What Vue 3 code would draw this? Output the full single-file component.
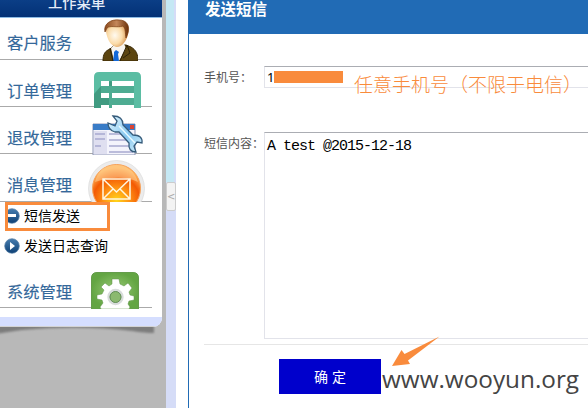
<script setup>
import { ref } from 'vue'

const phone = ref('1')
const message = ref('A test @2015-12-18')
const menu = [
  { id: 'service', label: '客户服务' },
  { id: 'order', label: '订单管理' },
  { id: 'change', label: '退改管理' },
  { id: 'message', label: '消息管理', children: ['短信发送', '发送日志查询'] },
  { id: 'system', label: '系统管理' },
]
</script>

<template>
  <div class="page">
    <aside class="side">
      <div class="panel">
        <header class="side-title">工作菜单</header>
        <template v-for="item in menu" :key="item.id">
          <div class="row" :class="item.id">
            <span class="label">{{ item.label }}</span>
            <svg v-if="item.id === 'service'" class="icon" width="36" height="42" viewBox="0 0 36 42">
              <defs>
                <radialGradient id="face" cx=".4" cy=".55" r=".65"><stop offset="0" stop-color="#fffaf0" /><stop offset=".5" stop-color="#fbdcaa" /><stop offset="1" stop-color="#c97a30" /></radialGradient>
                <linearGradient id="hair" x1="0" x2="1"><stop offset="0" stop-color="#8a4a1d" /><stop offset=".5" stop-color="#c4875a" /><stop offset="1" stop-color="#6a3008" /></linearGradient>
              </defs>
              <path d="M1 42C1 35 3 32 8 30L12 26L24 26L29 28C34 31 36 35 36 42Z" fill="#5c4510" stroke="#3e2c07" />
              <path d="M9 29L13 25H22L24 29L17 42H12Z" fill="#f7f4ef" />
              <path d="M12 33L14 31L17 33L16 35L17 42H11L12 35Z" fill="#1268d8" />
              <path d="M8 29L11 42M25 26L18 42M25 26L28 34L21 39" fill="none" stroke="#2d2106" />
              <path d="M4 12C4 4 10 2 16 2C24 2 27 7 26 15C25 22 19 29 14 28C8 26 5 20 4 12Z" fill="url(#face)" />
              <path d="M3 13C1 5 9 0 17 1C25 1 28 7 26 14L24 19C23 14 24 10 21 7C15 9 8 6 5 9Z" fill="url(#hair)" stroke="#793b10" stroke-width=".7" />
            </svg>
            <svg v-else-if="item.id === 'order'" class="icon" width="47" height="36" viewBox="0 0 47 36">
              <path d="M0 36V5Q0 0 5 0H42Q47 0 47 5V36Z" fill="#5bbda3" />
              <path d="M0 22L7 14L16 9L40 14V36H0Z" fill="#419b81" />
              <path d="M7 14H40V36H15V26H7Z" fill="#5bbda3" opacity=".5" />
              <path d="M7 9H15V14H7ZM18 9H40V14H18ZM7 21H15V26H7ZM18 21H40V26H18ZM7 33H15V36H7ZM18 33H40V36H18Z" fill="#fff" />
            </svg>
            <svg v-else-if="item.id === 'change'" class="icon" width="52" height="40" viewBox="0 0 52 40">
              <defs><linearGradient id="steel" x1="0" y1="0" x2="1" y2="1"><stop offset="0" stop-color="#e2f5ff" /><stop offset=".55" stop-color="#86c8f0" /><stop offset="1" stop-color="#d7f0fb" /></linearGradient></defs>
              <path d="M1 9H43V40H1Z" fill="#f4f4fc" stroke="#8c95b4" />
              <path d="M1 9H43V15H1Z" fill="#397cc7" />
              <path d="M38 10H42V14H38Z" fill="#d84436" />
              <path d="M2 16H15V39H2Z" fill="#dfdff0" />
              <path d="M3 19H13M3 24H13M3 31H9M17 19H36M17 25H37M17 31H38M17 37H41" stroke="#a8a9d0" stroke-width="1.5" />
              <path d="M21 1L25 6L23 11L16 8Q16 15 23 17L27 17L37 28Q36 37 44 37L42 31L45 27L50 28Q51 20 41 20L31 10Q31 1 21 1Z" fill="url(#steel)" stroke="#365c7b" stroke-width="1.3" />
              <path d="M27 11L43 28" stroke="#e9faff" stroke-width="1.4" />
            </svg>
            <svg v-else-if="item.id === 'message'" class="icon" width="57" height="42" viewBox="0 0 57 42">
              <defs><radialGradient id="amber" cx=".5" cy=".75" r=".68"><stop offset="0" stop-color="#ffd51b" /><stop offset=".38" stop-color="#ff9514" /><stop offset=".72" stop-color="#f35a04" /><stop offset="1" stop-color="#ffb356" /></radialGradient></defs>
              <circle cx="28.5" cy="28.5" r="28" fill="#ececec" stroke="#d7d7d7" stroke-width=".6" />
              <circle cx="28.5" cy="28.5" r="24" fill="url(#amber)" stroke="#f7a057" />
              <path d="M7 22C11 7 21 5 29 5C38 5 47 11 50 22C37 16 22 17 7 22Z" fill="#ffd49a" opacity=".55" />
              <path d="M15 19H42V39H15ZM15 19L28.5 32L42 19M15 39L25 29M42 39L32 29" fill="none" stroke="#fff7e2" stroke-width="1.5" />
            </svg>
            <svg v-else class="icon" width="48" height="37" viewBox="0 0 48 37">
              <defs><radialGradient id="leaf"><stop offset="0" stop-color="#9bcb78" /><stop offset="1" stop-color="#63a543" /></radialGradient></defs>
              <path d="M.5 37V6Q.5 .5 6 .5H42Q47.5 .5 47.5 6V37Z" fill="url(#leaf)" stroke="#659c4c" />
              <path d="M21 7H28L29 12L33 14L37 11L41 16L38 20L39 23L43 24V28L38 29L37 32L39 35L38 37H10L9 35L12 31L11 28L6 27V23L11 22L13 18L10 15L14 11L18 14L21 12Z" fill="#fff" stroke="#5d9246" stroke-width=".5" />
              <circle cx="24.5" cy="25" r="7" fill="#8bb96f" stroke="#d8dcdb" stroke-width="2.4" />
              <circle cx="24.5" cy="25" r="5.5" fill="none" stroke="#638e59" />
            </svg>
          </div>
          <ul v-if="item.children" class="sub">
            <li v-for="(child, i) in item.children" :key="child" :class="{ active: i === 0 }">
              <svg class="bullet" width="16" height="16" viewBox="0 0 16 16">
                <defs><linearGradient id="orb" x2="0" y2="1"><stop stop-color="#477daf" /><stop offset="1" stop-color="#0d4075" /></linearGradient></defs>
                <circle cx="8" cy="8" r="7.3" fill="url(#orb)" stroke="#577fa6" stroke-width=".7" />
                <path v-if="i === 0" d="M3 6H12V9H3Z" fill="#fff" />
                <path v-else d="M6 4L11 8L6 12Z" fill="#fff" />
              </svg>
              <span>{{ child }}</span>
            </li>
          </ul>
        </template>
        <div class="panel-end"></div>
      </div>
      <svg class="shadow" width="162" height="14" viewBox="0 0 162 14">
        <defs><filter id="soft" x="-10%" y="-50%" width="120%" height="200%"><feGaussianBlur stdDeviation="1" /></filter></defs>
        <path d="M-4-4H154V6Q145 6 132 4Q80-2 22 3L-4 7Z" fill="#7d7d7d" filter="url(#soft)" />
      </svg>
    </aside>
    <div class="splitter"><div class="upper"></div><button class="handle">&lt;</button></div>
    <main class="main">
      <h1>发送短信</h1>
      <form class="form" @submit.prevent>
        <div class="field phone">
          <label>手机号：</label>
          <div class="input-wrap"><input v-model="phone"><span class="mask"></span></div>
          <span class="note">任意手机号（不限于电信）</span>
        </div>
        <div class="field content">
          <label>短信内容：</label>
          <textarea v-model="message"></textarea>
        </div>
        <div class="actions">
          <button class="submit">确 定</button>
          <span class="site">www.wooyun.org</span>
          <svg class="arrow" width="49" height="31" viewBox="0 0 49 31"><path d="M1 30L10.5 14L13.5 18L48.5 .5L17 24.5L19 28Z" fill="#f98b3c" /></svg>
        </div>
      </form>
    </main>
  </div>
</template>

<style>
body { overflow: hidden; }
</style>
<style scoped>
* { box-sizing: border-box; }
.page { display: flex; width: 588px; height: 408px; overflow: hidden; background: #fff; font-family: "Liberation Sans", "Noto Sans CJK SC", sans-serif; }
.side { flex: 0 0 166px; background: #b8b8b8; }
.panel { width: 162px; background: #fff; border-radius: 0 0 9px 0; overflow: hidden; }
.side-title { height: 18px; background: linear-gradient(#0b3e86, #033176); border-bottom: 1px solid #8dbbe5; color: #e6edf8; font-size: 14.3px; line-height: 17px; padding: 0 0 5px 48px; display: flex; align-items: flex-end; font-weight: 500; }
.row { display: flex; justify-content: space-between; align-items: flex-end; width: 152px; height: 47px; padding-left: 7px; border-bottom: 1px solid #aaa; }
.service { height: 42px; }
.message { height: 48px; }
.system { height: 46px; }
.label { color: #34689a; font-size: 16.3px; line-height: 20px; margin-bottom: 5px; -webkit-text-stroke: .15px #34689a; }
.service .label, .message .label { margin-bottom: 6px; }
.icon { display: block; flex: none; margin-bottom: -2px; }
.service .icon { margin-right: 14px; }
.order .icon { margin-right: 11px; }
.change .icon { margin-right: 8px; }
.message .icon { margin-right: 7px; margin-bottom: -1px; }
.system .icon { margin-right: 13px; }
.sub { list-style: none; margin: 0; padding: 0 0 0 5px; height: 60px; font-size: 14px; }
.sub li { display: flex; align-items: center; height: 30px; gap: 4px; line-height: 20px; width: 140px; }
.sub .bullet { flex: none; margin-left: -1px; }
.sub .active { width: 105px; height: 29px; border: 3px solid #f98b3c; overflow: hidden; padding-bottom: 1px; }
.sub .active .bullet { margin-left: -4px; }
.panel-end { height: 10px; background: #d5deff; margin-top: 9px; border-bottom: 1px solid #d3d3d3; }
.shadow { display: block; }
.splitter { flex: 0 0 10px; background: #d5dcf7; }
.upper { width: 8px; height: 182px; background: #c5e8f4; }
.handle { display: block; width: 10px; height: 29px; border: 1px solid #ccc; border-radius: 2px; background: #f3f3f3; color: #aaa; padding: 0; font: 10px "DejaVu Sans", sans-serif; }
.main { flex: 1; min-width: 0; margin-left: 12px; border-left: 1px solid #216bb5; overflow: hidden; }
h1 { height: 34px; margin: 0; padding: 0 0 0 16px; background: #216bb5; color: #fff; font-size: 15.5px; line-height: 19px; font-weight: 700; }
.form { padding: 32px 0 0 15px; }
.field { display: flex; position: relative; }
label { flex: 0 0 60px; font-size: 12px; color: #555; line-height: 24px; white-space: nowrap; }
.phone { height: 66px; }
.input-wrap { position: relative; flex: 0 0 340px; height: 22px; }
input { display: block; width: 340px; height: 22px; border: 1px solid #e2e3ea; border-top-color: #abadb3; padding: 0 2px; font: 13px "Noto Sans", sans-serif; color: #000; outline: none; }
.mask { position: absolute; left: 10px; top: 5px; width: 69px; height: 12px; background: #f98b3c; }
.note { position: absolute; left: 150px; top: 5px; color: #f98b3c; font: 300 19px/26px "Noto Sans CJK SC", sans-serif; white-space: nowrap; }
.content { height: 213px; border-bottom: 1px solid #e6e6e6; }
textarea { display: block; flex: 0 0 340px; height: 207px; border: 1px solid #e2e3ea; border-top-color: #abadb3; padding: 5px 2px; resize: none; outline: none; font: 15px/18px "Liberation Mono", monospace; letter-spacing: -1px; color: #000; }
.actions { display: flex; position: relative; padding: 14px 0 0 75px; }
.submit { width: 102px; height: 35px; border: 0; background: #00c; color: #fff; font: 14px/20px "Liberation Sans", "Noto Sans CJK SC", sans-serif; padding: 0; }
.site { color: #444; font: 24.3px/35px "Open Sans", sans-serif; margin-left: 1px; padding-top: 2px; }
.arrow { position: absolute; left: 187px; top: -9px; }
</style>
